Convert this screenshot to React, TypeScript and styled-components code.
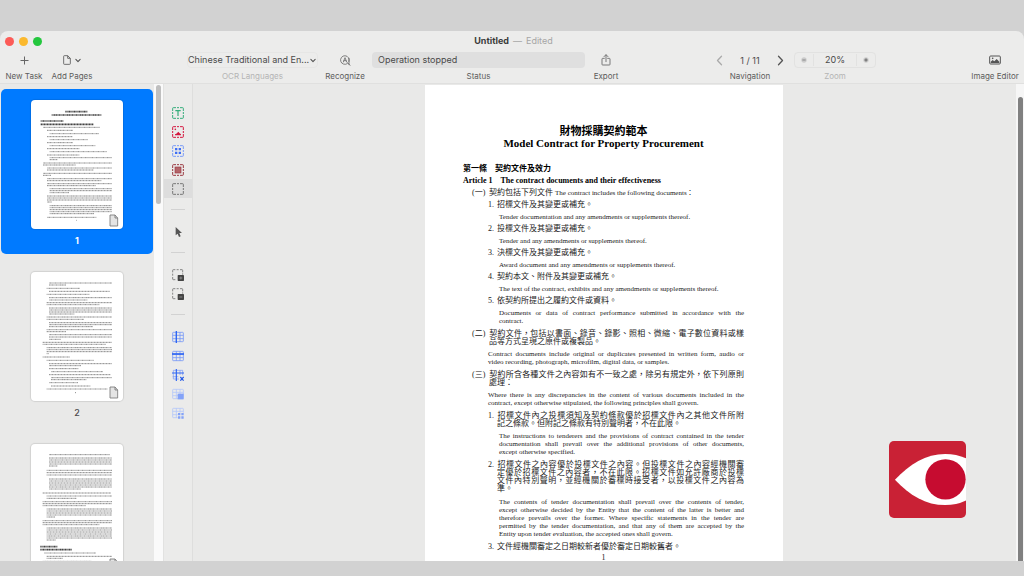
import React from 'react';
import styled, { createGlobalStyle, css } from 'styled-components';

const GlobalStyle = createGlobalStyle`
  * { box-sizing: border-box; }
  body { margin: 0; background: #d2d2d2; font-family: Inter, "Liberation Sans", sans-serif; color: #4a4a4a; }
  button, select, output { font: inherit; color: inherit; }
  button { border: 0; padding: 0; background: none; }
  svg { display: block; flex: none; }
`;

const Desktop = styled.div`
  height: 100vh;
  padding: 31px 0 15px;
  background: #d2d2d2;
`;

const Window = styled.div`
  position: relative;
  height: 100%;
  display: flex;
  flex-direction: column;
  overflow: hidden;
  border-radius: 8px 8px 0 0;
  background: #ececeb;
`;

const TitleBar = styled.header`
  flex: none;
  height: 20px;
  display: grid;
  grid-template-columns: 1fr auto 1fr;
  align-items: center;
  padding: 0 2px 0 5px;
`;

const Lights = styled.div`
  display: flex;
  gap: 5px;
`;

const Light = styled.button<{ $color: string }>`
  width: 9px;
  height: 9px;
  border-radius: 50%;
  background: ${(p) => p.$color};
`;

const Title = styled.h1`
  margin: 0;
  font-size: 9px;
  line-height: 12px;
  font-weight: 700;
  color: #3a3a3a;
  display: flex;
  gap: 4px;
  span { font-weight: 400; color: #a6a6a6; }
`;

const Toolbar = styled.div`
  flex: none;
  display: flex;
  justify-content: space-between;
  padding: 0 5px 0 6px;
  border-bottom: 1px solid #e0e0df;
`;

const Group = styled.div<{ $gap: number }>`
  display: flex;
  gap: ${(p) => p.$gap}px;
`;

const Item = styled.div<{ $width?: number }>`
  width: ${(p) => (p.$width ? `${p.$width}px` : 'auto')};
  display: flex;
  flex-direction: column;
  align-items: center;
`;

const ItemButton = styled(Item).attrs({ as: 'button' })``;

const Face = styled.span`
  height: 18px;
  display: flex;
  align-items: center;
  gap: 4px;
`;

const Caption = styled.span<{ $dim?: boolean }>`
  font-size: 8px;
  line-height: 14px;
  white-space: nowrap;
  color: ${(p) => (p.$dim ? '#b4b4b4' : '#5c5c5c')};
`;

const LanguageBox = styled.span`
  width: 131px;
  height: 16px;
  margin: 1px 0;
  display: flex;
  align-items: center;
  padding-right: 1px;
  border: 1px solid #e6e6e5;
  border-radius: 4px;
`;

const LanguageSelect = styled.select`
  flex: 1;
  min-width: 0;
  appearance: none;
  border: 0;
  padding: 0;
  background: none;
  font-size: 9px;
  line-height: 12px;
`;

const StatusField = styled.output`
  width: 213px;
  height: 16px;
  margin: 1px 0;
  padding: 0 6px;
  border-radius: 4px;
  background: #dfdfdf;
  font-size: 9px;
  line-height: 16px;
`;

const NavRow = styled.span`
  width: 100%;
  height: 18px;
  display: flex;
  align-items: center;
  justify-content: space-between;
  padding: 0 2px;
  font-size: 9px;
`;

const ZoomRow = styled.span`
  width: 100%;
  height: 16px;
  margin: 1px 0;
  display: grid;
  grid-template-columns: 18px 1fr 18px;
  align-items: center;
  text-align: center;
  border: 1px solid #e2e2e1;
  border-radius: 4px;
  font-size: 9px;
  button { display: flex; justify-content: center; }
  output { border: solid #e2e2e1; border-width: 0 1px; line-height: 12px; }
`;

const Body = styled.div`
  flex: 1;
  min-height: 0;
  display: flex;
`;

const Sidebar = styled.nav`
  flex: none;
  width: 154px;
  overflow: hidden;
  padding: 5px 1px 0;
  background: #e9e9e8;
  display: flex;
  flex-direction: column;
  gap: 7px;
`;

const PageCard = styled.button<{ $selected?: boolean }>`
  flex: none;
  height: 165px;
  padding-top: 11px;
  display: flex;
  flex-direction: column;
  align-items: center;
  gap: 5px;
  border-radius: 5px;
  font-size: 9px;
  line-height: 14px;
  font-weight: 500;
  ${(p) => p.$selected && css`
    background: #007aff;
    color: #ffffff;
    font-weight: 700;
  `}
`;

const Sheet = styled.span`
  width: 92px;
  height: 129px;
  border-radius: 4px;
  background: #ffffff;
  box-shadow: 0 0 1px 1px rgba(0, 0, 0, 0.1);
  svg { width: 92px; height: 129px; }
`;

const SideScroll = styled.div`
  flex: none;
  width: 10px;
  padding: 1px 2px;
  background: #fafafa;
  border-right: 1px solid #e2e2e1;
`;

const SideThumb = styled.div`
  width: 5px;
  height: 119px;
  border-radius: 3px;
  background: #bfbfbf;
`;

const Rail = styled.aside`
  flex: none;
  width: 29px;
  padding-top: 19px;
  border-right: 1px solid #dededd;
  background: #ebebea;
`;

const Tool = styled.button<{ $active?: boolean }>`
  width: 100%;
  height: 19px;
  display: flex;
  align-items: center;
  justify-content: center;
  background: ${(p) => (p.$active ? '#dddddd' : 'none')};
`;

const Rule = styled.hr`
  width: 14px;
  height: 1px;
  margin: 11px auto 12px;
  border: 0;
  background: #d2d2d2;
`;

const Viewer = styled.main`
  flex: 1;
  min-width: 0;
  overflow: hidden;
  display: flex;
  justify-content: center;
  padding: 1px 1px 0 0;
  background: #e9e9e8;
`;

const ViewScroll = styled.div`
  flex: none;
  width: 8px;
  padding: 13px 1px 0 2px;
  background: #f6f6f6;
`;

const ViewThumb = styled.div`
  height: 100%;
  border-radius: 3px 3px 0 0;
  background: #808080;
`;

const Paper = styled.article`
  flex: none;
  width: 358px;
  height: 507px;
  padding: 40px 39px 0 38px;
  background: #ffffff;
  color: #222222;
  font-family: "Liberation Serif", "Noto Sans CJK TC", serif;
  font-size: 8px;
  line-height: 8px;
`;

const PaperTitle = styled.h2`
  margin: 0 0 16px;
  text-align: center;
  font-size: 11px;
  line-height: 12px;
  color: #000000;
  span { display: block; }
`;

const Clause = styled.h3`
  margin: 4px 0 0;
  font-size: 8px;
  line-height: 8px;
  color: #000000;
  white-space: pre;
`;

const Para = styled.p<{ $indent: number; $hang?: number; $loose?: boolean }>`
  margin: 4px 0 0;
  padding: 0 0 ${(p) => (p.$loose ? 1 : 0)}px ${(p) => p.$indent}px;
  text-indent: ${(p) => -(p.$hang || 0)}px;
`;

const English = styled(Para)`
  font-size: 7px;
`;

const Latin = styled.span`
  font-size: 7px;
`;

const Line = styled.span`
  display: block;
  white-space: nowrap;
  &:not(:first-child) { text-indent: 0; }
  &:not(:last-child) { text-align: justify; text-align-last: justify; white-space: normal; }
`;

const Mark = styled.span<{ $width: number }>`
  display: inline-block;
  width: ${(p) => p.$width}px;
  text-indent: 0;
  text-align-last: left;
`;

const Folio = styled.p`
  margin: 3px 0 0;
  text-align: center;
`;

const Logo = styled.div`
  position: absolute;
  right: 58px;
  bottom: 43px;
  width: 77px;
  height: 77px;
`;

type Row = [number, number, number, number?];

const block = (from: number, count: number, step: number, x0: number, x1: number, last: number): Row[] =>
  Array.from({ length: count }, (_, i): Row => [from + i * step, x0, i === count - 1 ? last : x1]);

const PAGE_ONE: Row[] = [
  [35, 103, 170, 1], [45, 62, 212, 1], [63, 29, 98, 1], [73, 29, 188, 1], [82, 36, 206],
  [91, 48, 125], [101, 56, 205], [110, 48, 125], [119, 56, 171], [128, 48, 125], [137, 56, 194],
  [146, 48, 145], [155, 56, 228], [165, 48, 145],
  ...block(173, 2, 6, 56, 243, 80), ...block(189, 2, 6, 36, 243, 135), ...block(204, 2, 6, 48, 243, 188),
  ...block(220, 2, 6, 36, 243, 60), ...block(236, 2, 6, 48, 243, 211), ...block(251, 2, 6, 48, 243, 194),
  ...block(266, 3, 6, 56, 243, 114), ...block(288, 4, 6, 48, 243, 62), ...block(317, 5, 6, 56, 243, 190),
  [352, 48, 196], [361, 135, 137],
];

const PAGE_TWO: Row[] = [
  ...block(33, 2, 6, 54, 243, 105), [49, 47, 147], [58, 54, 236], [67, 47, 175],
  ...block(77, 2, 7, 54, 243, 170), ...block(92, 2, 6, 47, 243, 205), ...block(108, 4, 6, 54, 243, 130),
  ...block(135, 2, 7, 47, 243, 160), ...block(152, 3, 6, 54, 243, 186), ...block(173, 2, 6, 47, 243, 105),
  ...block(188, 3, 7, 54, 243, 90), ...block(211, 2, 6, 35, 243, 225), ...block(227, 4, 6, 47, 243, 54),
  [255, 35, 116], [265, 47, 188], ...block(275, 2, 6, 54, 243, 150), [290, 54, 142], [299, 60, 216],
  [308, 54, 238], ...block(317, 2, 6, 60, 243, 166), [332, 54, 142], [342, 60, 178], [351, 47, 230], [362, 132, 136],
];

const PAGE_THREE: Row[] = [
  [32, 54, 236], ...block(42, 5, 6, 54, 243, 80), ...block(79, 3, 7, 47, 243, 243),
  ...block(105, 6, 6, 54, 243, 150), [147, 35, 240], ...block(156, 2, 7, 47, 243, 136),
  ...block(173, 3, 6, 35, 243, 165), ...block(195, 5, 6, 47, 243, 72), ...block(230, 3, 6, 35, 243, 205),
  ...block(252, 7, 6, 47, 243, 75), [308, 28, 80, 1], [317, 28, 122, 1], [327, 40, 195],
  ...block(337, 2, 6, 47, 243, 96), [352, 35, 182],
];

const DASHES = ['2 1 3 1 2 1 4 1', '3 1 2 1 5 1', '2 1 2 1 4 1', '4 1 3 1'];

const Thumbnail = ({ rows }: { rows: Row[] }) => (
  <Sheet>
    <svg viewBox="0 0 276 387" aria-hidden="true">
      {rows.map(([y, x0, x1, bold], i) => (
        <path
          key={i}
          d={`M${x0} ${y}H${x1}`}
          stroke={bold ? '#444' : '#8a8a8a'}
          strokeWidth={bold ? 5 : 3}
          strokeDasharray={DASHES[i % 4]}
        />
      ))}
      <path d="M237 345h15l8 9v24h-23z" fill="#e4e4e4" stroke="#777" strokeWidth="2.5" />
      <path d="M252 345v9h8" fill="none" stroke="#777" strokeWidth="2.5" />
    </svg>
  </Sheet>
);

const Icon = ({ children, size = 12, box = 36, color = '#666' }: {
  children: React.ReactNode; size?: number; box?: number; color?: string;
}) => (
  <svg width={size} height={size} viewBox={`0 0 ${box} ${box}`} fill="none" stroke={color} strokeWidth="3" aria-hidden="true">
    {children}
  </svg>
);

const Brackets = () => (
  <path d="M2 12V4q0-2 2-2h8M24 2h8q2 0 2 2v8M34 24v8q0 2-2 2h-8M12 34H4q-2 0-2-2v-8M15 2h6M15 34h6M2 15v6M34 15v6" />
);

const Chevron = () => (
  <svg width="6" height="5" viewBox="0 0 14 10" fill="none" stroke="#555" strokeWidth="2.6" strokeLinecap="round" strokeLinejoin="round" aria-hidden="true">
    <path d="M2 2.500l5 5 5-5" />
  </svg>
);

const Arrow = ({ back }: { back?: boolean }) => (
  <svg width="7" height="11" viewBox="0 0 14 22" fill="none" stroke={back ? '#aaa' : '#555'} strokeWidth="2.6" strokeLinecap="round" strokeLinejoin="round" aria-hidden="true">
    <path d={back ? 'M11 2.500L3 11l8 8.500' : 'M3 2.500L11 11l-8 8.500'} />
  </svg>
);

const Grid = () => (
  <path d="M4 4h28q2 0 2 2v24q0 2-2 2H4q-2 0-2-2V6q0-2 2-2zM13 4v28M24 4v28M2 13h32M2 23h32" strokeWidth="2.4" />
);

const CornerBox = ({ mark }: { mark: string }) => (
  <Icon color="#777">
    <path d="M2 10V4q0-2 2-2h6M14 2h6M24 2h6q2 0 2 2v6M10 32H4q-2 0-2-2v-6M2 14v6M32 13v4" strokeWidth="2.6" />
    <rect x="17" y="18" width="19" height="18" rx="2" fill="#444" stroke="none" />
    <path d={mark} stroke="#999" strokeWidth="2.4" />
  </Icon>
);

const OCR_LANGUAGES = 'Chinese Traditional and En...';

export default function App() {
  return (
    <Desktop>
      <GlobalStyle />
      <Window>
        <TitleBar>
          <Lights>
            <Light $color="#fc5b57" aria-label="Close" />
            <Light $color="#fbb92e" aria-label="Minimize" />
            <Light $color="#24c73e" aria-label="Full screen" />
          </Lights>
          <Title>Untitled <span>—</span> <span>Edited</span></Title>
        </TitleBar>

        <Toolbar>
          <Group $gap={10}>
            <ItemButton $width={36}>
              <Face>
                <Icon size={9} box={18}><path d="M9 1v16M1 9h16" strokeWidth="2" /></Icon>
              </Face>
              <Caption>New Task</Caption>
            </ItemButton>
            <ItemButton $width={40}>
              <Face>
                <svg width="8" height="10" viewBox="0 0 24 30" fill="none" stroke="#666" strokeWidth="2.8" strokeLinejoin="round" aria-hidden="true">
                  <path d="M4 2h10l8 8v16q0 2-2 2H4q-2 0-2-2V4q0-2 2-2zM14 2v8h8" />
                </svg>
                <Chevron />
              </Face>
              <Caption>Add Pages</Caption>
            </ItemButton>
          </Group>

          <Group $gap={8}>
            <Item as="label">
              <LanguageBox>
                <LanguageSelect defaultValue={OCR_LANGUAGES}>
                  <option>{OCR_LANGUAGES}</option>
                </LanguageSelect>
                <Chevron />
              </LanguageBox>
              <Caption $dim>OCR Languages</Caption>
            </Item>
            <ItemButton $width={38}>
              <Face>
                <svg width="11" height="11" viewBox="0 0 33 33" fill="none" stroke="#666" strokeWidth="2.4" strokeLinecap="round" aria-hidden="true">
                  <path d="M22 26A13 13 0 1 1 27 19.500M23 23l7 8M10 21l5-13 5 13M12 17h6" />
                  <path d="M27 10v19" />
                </svg>
              </Face>
              <Caption>Recognize</Caption>
            </ItemButton>
            <Item>
              <StatusField>Operation stopped</StatusField>
              <Caption>Status</Caption>
            </Item>
            <ItemButton $width={26}>
              <Face>
                <svg width="10" height="12" viewBox="0 0 30 36" fill="none" stroke="#666" strokeWidth="2.600" strokeLinecap="round" strokeLinejoin="round" aria-hidden="true">
                  <path d="M10 13H5q-2 0-2 2v16q0 2 2 2h20q2 0 2-2V15q0-2-2-2h-5M15 23V3M9 8l6-6 6 6" />
                </svg>
              </Face>
              <Caption>Export</Caption>
            </ItemButton>
          </Group>

          <Group $gap={8}>
            <Item $width={72}>
              <NavRow>
                <button aria-label="Previous page"><Arrow back /></button>
                <span>1 / 11</span>
                <button aria-label="Next page"><Arrow /></button>
              </NavRow>
              <Caption>Navigation</Caption>
            </Item>
            <Item $width={82}>
              <ZoomRow>
                <button aria-label="Zoom out">
                  <Icon size={6} box={18} color="#aaa"><circle cx="9" cy="9" r="8" fill="#ccc" stroke="none" /><path d="M4 9h10" stroke="#888" /></Icon>
                </button>
                <output>20%</output>
                <button aria-label="Zoom in">
                  <Icon size={6} box={18}><circle cx="9" cy="9" r="8" fill="#ccc" stroke="none" /><path d="M9 4v10M4 9h10" /></Icon>
                </button>
              </ZoomRow>
              <Caption $dim>Zoom</Caption>
            </Item>
          </Group>

          <ItemButton $width={48}>
            <Face>
              <svg width="12" height="10" viewBox="0 0 36 30" fill="none" stroke="#555" strokeWidth="3" aria-hidden="true">
                <rect x="2" y="3" width="32" height="24" rx="3" />
                <path d="M5 24v-4l6-5 5 4 7-7 8 8v4z" fill="#555" stroke="none" />
                <circle cx="11" cy="10" r="2.500" fill="#555" stroke="none" />
              </svg>
            </Face>
            <Caption>Image Editor</Caption>
          </ItemButton>
        </Toolbar>

        <Body>
          <Sidebar aria-label="Pages">
            <PageCard $selected><Thumbnail rows={PAGE_ONE} />1</PageCard>
            <PageCard><Thumbnail rows={PAGE_TWO} />2</PageCard>
            <PageCard aria-label="Page 3"><Thumbnail rows={PAGE_THREE} /></PageCard>
          </Sidebar>
          <SideScroll><SideThumb /></SideScroll>

          <Rail>
            <Tool aria-label="Text area">
              <Icon color="#35ad7b"><Brackets /><path d="M10 11h16M18 11v16" strokeWidth="3.600" /></Icon>
            </Tool>
            <Tool aria-label="Picture area">
              <Icon color="#d4173f"><Brackets /><path d="M9 28v-3l4-2 6-6 4 5 4 3v3z" fill="#d4173f" stroke="none" /><circle cx="10" cy="10" r="2.500" fill="#d4173f" stroke="none" /></Icon>
            </Tool>
            <Tool aria-label="Table area">
              <Icon color="#7b9cf7"><Brackets /><path d="M9 9h7v7H9zM20 9h7v7h-7zM9 20h7v7H9zM20 20h7v7h-7z" fill="#3f6ff5" stroke="none" /></Icon>
            </Tool>
            <Tool aria-label="Background picture area">
              <Icon color="#9b3a42"><Brackets /><rect x="9" y="9" width="18" height="18" fill="#b4656a" strokeWidth="2" /></Icon>
            </Tool>
            <Tool $active aria-label="Recognition area">
              <Icon color="#777"><Brackets /></Icon>
            </Tool>
            <Rule />
            <Tool aria-label="Select">
              <Icon><path d="M11 3v25l6-5 4 10 5-2-4-10h8z" fill="#555" stroke="none" /></Icon>
            </Tool>
            <Rule />
            <Tool aria-label="Add area part"><CornerBox mark="M22 27h9M26.500 22.500v9" /></Tool>
            <Tool aria-label="Delete area part"><CornerBox mark="M22 27h9" /></Tool>
            <Rule />
            <Tool aria-label="Add vertical separator">
              <Icon color="#7396f8"><Grid /><path d="M13 0v36" stroke="#2f66f2" strokeWidth="4" /></Icon>
            </Tool>
            <Tool aria-label="Add horizontal separator">
              <Icon color="#7396f8"><Grid /><path d="M0 12h36" stroke="#2f66f2" strokeWidth="5" /></Icon>
            </Tool>
            <Tool aria-label="Delete separator">
              <Icon color="#7396f8">
                <path d="M4 4h28v15M4 4v26h17M24 4v14M2 23h17" strokeWidth="2" />
                <path d="M13 0v36M0 12h36" stroke="#2f66f2" strokeWidth="3.500" />
                <path d="M25 24l10 11M35 24l-10 11" stroke="#1f55e6" strokeWidth="3.500" />
              </Icon>
            </Tool>
            <Tool aria-label="Merge cells">
              <Icon color="#b4c6fa"><Grid /><rect x="17" y="17" width="18" height="17" fill="#84a3f8" stroke="none" /></Icon>
            </Tool>
            <Tool aria-label="Split cells">
              <Icon color="#b4c6fa"><Grid /><path d="M17 17h19v19H17z" fill="#ebebea" stroke="none" /><path d="M18 18h7v7h-7zM28 18h7v7h-7zM18 28h7v7h-7zM28 28h7v7h-7z" fill="#84a3f8" stroke="none" /></Icon>
            </Tool>
          </Rail>

          <Viewer>
            <Paper lang="zh-Hant">
              <PaperTitle>
                <span>財物採購契約範本</span>
                <span>Model Contract for Property Procurement</span>
              </PaperTitle>
              <Clause>第一條　契約文件及效力</Clause>
              <Clause>{'Article 1    The contract documents and their effectiveness'}</Clause>
              <Para $indent={26} $hang={17}><Line><Mark $width={17}>(一)</Mark>契約包括下列文件 <Latin>The contract includes the following documents：</Latin></Line></Para>
              <Para $indent={34} $hang={9}><Line><Mark $width={9}>1.</Mark>招標文件及其變更或補充。</Line></Para>
              <English $indent={36}><Line>Tender documentation and any amendments or supplements thereof.</Line></English>
              <Para $indent={34} $hang={9}><Line><Mark $width={9}>2.</Mark>投標文件及其變更或補充。</Line></Para>
              <English $indent={36}><Line>Tender and any amendments or supplements thereof.</Line></English>
              <Para $indent={34} $hang={9}><Line><Mark $width={9}>3.</Mark>決標文件及其變更或補充。</Line></Para>
              <English $indent={36}><Line>Award document and any amendments or supplements thereof.</Line></English>
              <Para $indent={34} $hang={9}><Line><Mark $width={9}>4.</Mark>契約本文、附件及其變更或補充。</Line></Para>
              <English $indent={36}><Line>The text of the contract, exhibits and any amendments or supplements thereof.</Line></English>
              <Para $indent={34} $hang={9}><Line><Mark $width={9}>5.</Mark>依契約所提出之履約文件或資料。</Line></Para>
              <English $indent={36} $loose>
                <Line>Documents or data of contract performance submitted in accordance with the</Line>
                <Line>contract.</Line>
              </English>
              <Para $indent={26} $hang={17}>
                <Line><Mark $width={17}>(二)</Mark>契約文件，包括以書面、錄音、錄影、照相、微縮、電子數位資料或樣</Line>
                <Line>品等方式呈現之原件或複製品。</Line>
              </Para>
              <English $indent={25} $loose>
                <Line>Contract documents include original or duplicates presented in written form, audio or</Line>
                <Line>video recording, photograph, microfilm, digital data, or samples.</Line>
              </English>
              <Para $indent={26} $hang={17}>
                <Line><Mark $width={17}>(三)</Mark>契約所含各種文件之內容如有不一致之處，除另有規定外，依下列原則</Line>
                <Line>處理：</Line>
              </Para>
              <English $indent={25} $loose>
                <Line>Where there is any discrepancies in the content of various documents included in the</Line>
                <Line>contract, except otherwise stipulated, the following principles shall govern.</Line>
              </English>
              <Para $indent={34} $hang={9}>
                <Line><Mark $width={9}>1.</Mark>招標文件內之投標須知及契約條款優於招標文件內之其他文件所附</Line>
                <Line>記之條款。但附記之條款有特別聲明者，不在此限。</Line>
              </Para>
              <English $indent={36} $loose>
                <Line>The instructions to tenderers and the provisions of contract contained in the tender</Line>
                <Line>documentation shall prevail over the additional provisions of other documents,</Line>
                <Line>except otherwise specified.</Line>
              </English>
              <Para $indent={34} $hang={9} $loose>
                <Line><Mark $width={9}>2.</Mark>招標文件之內容優於投標文件之內容。但投標文件之內容經機關審</Line>
                <Line>定優於招標文件之內容者，不在此限。招標文件如允許廠商於投標</Line>
                <Line>文件內特別聲明，並經機關於審標時接受者，以投標文件之內容為</Line>
                <Line>準。</Line>
              </Para>
              <English $indent={36} $loose>
                <Line>The contents of tender documentation shall prevail over the contents of tender,</Line>
                <Line>except otherwise decided by the Entity that the content of the latter is better and</Line>
                <Line>therefore prevails over the former. Where specific statements in the tender are</Line>
                <Line>permitted by the tender documentation, and that any of them are accepted by the</Line>
                <Line>Entity upon tender evaluation, the accepted ones shall govern.</Line>
              </English>
              <Para $indent={34} $hang={9}><Line><Mark $width={9}>3.</Mark>文件經機關審定之日期較新者優於審定日期較舊者。</Line></Para>
              <Folio>1</Folio>
            </Paper>
          </Viewer>
          <ViewScroll><ViewThumb /></ViewScroll>
        </Body>

        <Logo>
          <svg width="77" height="77" viewBox="0 0 233 233" role="img" aria-label="FineReader">
            <rect width="233" height="233" rx="15" fill="#c92135" />
            <path d="M18 117C62 70 112 39 170 39q34 0 63 13v128q-29 14-63 14C112 194 62 164 18 117z" fill="#fff" />
            <circle cx="171" cy="116" r="61" fill="#c60c30" />
          </svg>
        </Logo>
      </Window>
    </Desktop>
  );
}
